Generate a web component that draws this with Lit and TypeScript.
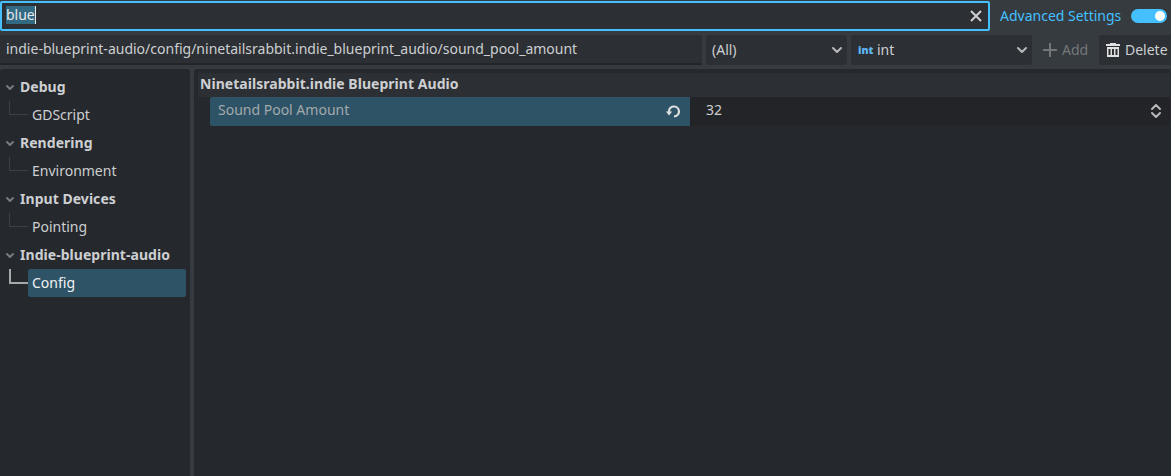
import { LitElement, html, css, svg } from "lit";
import { customElement } from "lit/decorators.js";

const sections = [
  { title: "Debug", child: "GDScript" },
  { title: "Rendering", child: "Environment" },
  { title: "Input Devices", child: "Pointing" },
  { title: "Indie-blueprint-audio", child: "Config", selected: true },
];

const chevron = () => html`<svg class="arrow" width="12" height="12" viewBox="0 0 12 12" fill="none">
  <path d="M2 4l4 4 4-4" stroke="currentColor" stroke-width="2" stroke-linecap="round" stroke-linejoin="round"/>
</svg>`;

const fold = () => html`<svg class="fold" width="12" height="12" viewBox="0 0 12 12" fill="none">
  <path d="M3 5l3 3 3-3" stroke="currentColor" stroke-width="2" stroke-linecap="round" stroke-linejoin="round"/>
</svg>`;

@customElement("app-root")
export class AppRoot extends LitElement {
  static styles = css`
    :host {
      display: flex;
      flex-direction: column;
      gap: 4px;
      box-sizing: border-box;
      width: 1171px;
      height: 476px;
      padding-top: 1px;
      overflow: hidden;
      background: #363b3f;
      color: #cdcfd2;
      font: 14px/20px "Noto Sans", sans-serif;
      white-space: nowrap;
    }
    svg { display: block; flex: none; }
    .bar { display: flex; height: 30px; flex: none; }
    .bar > * { flex: none; }
    .search {
      box-sizing: border-box;
      width: 990px;
      border: 2px solid #44c0ff;
      border-radius: 2px;
      background: #2c2f33;
      display: flex;
      align-items: center;
      justify-content: space-between;
      padding: 0 4px 2px 4px;
    }
    .query { height: 18px; line-height: 18px; background: #336a83; color: #e3e8ea; border-right: 1px solid #e8e8e8; }
    .clear { margin-top: 2px; }
    .advanced { display: flex; align-items: center; gap: 10px; padding-left: 10px; color: #44c0ff; }
    .toggle { box-sizing: border-box; width: 36px; height: 14px; border-radius: 7px; background: #44c0ff; padding: 2px; display: flex; justify-content: flex-end; }
    .knob { width: 10px; height: 10px; border-radius: 50%; background: #fff; }
    .path { box-sizing: border-box; width: 702px; margin-right: 4px; padding: 4px 6px; background: #2c2f33; border-bottom: 2px solid #232529; border-radius: 2px 2px 0 0; }
    .button { box-sizing: border-box; display: flex; align-items: center; background: #2c2f33; border-radius: 3px; padding: 0 4px 0 6px; }
    .filter { width: 141px; margin-right: 4px; justify-content: space-between; }
    .type { width: 181px; justify-content: space-between; }
    .typename { display: flex; align-items: center; gap: 4px; }
    .glyph { box-sizing: border-box; width: 16px; padding-left: 1px; font: 900 10.5px/16px "Noto Sans", sans-serif; color: #5fb8f5; }
    .add { width: 67px; display: flex; align-items: center; gap: 4px; padding-left: 10px; box-sizing: border-box; color: #74777a; }
    .delete { width: 72px; gap: 4px; border-radius: 3px 0 0 3px; }
    .arrow { color: #b7b9bb; }
    .body { flex: 1; display: flex; gap: 4px; min-height: 0; }
    .tree { width: 190px; background: #25282c; border-radius: 3px 3px 0 0; padding-top: 4px; box-sizing: border-box; }
    .head { height: 28px; display: flex; align-items: center; gap: 4px; padding-left: 4px; font-weight: 700; letter-spacing: 0.04px; }
    .fold { color: #787b7e; }
    .item { height: 28px; display: flex; }
    .branch { width: 28px; }
    .leaf { box-sizing: border-box; width: 158px; height: 28px; padding: 4px; border-radius: 2px; }
    .chosen { background: #2e5366; color: #f2f2f2; }
    .inspector { width: 977px; box-sizing: border-box; background: #25282c; border-radius: 3px 3px 0 0; padding: 4px 1px 0 4px; }
    .category { height: 24px; line-height: 22px; padding-left: 2px; background: #2c2f33; font-weight: 700; letter-spacing: 0.04px; }
    .property { display: flex; height: 29px; margin-left: 12px; }
    .label { box-sizing: border-box; width: 480px; padding: 0 9px 0 8px; background: #2e5366; color: #a2a9ad; border-radius: 2px 0 0 2px; display: flex; justify-content: space-between; line-height: 25px; }
    .revert { margin-top: 6px; }
    .value { flex: 1; background: #232428; display: flex; justify-content: space-between; line-height: 25px; padding: 0 6px 0 16px; border-radius: 2px; }
    .spin { margin-top: 6px; }
  `;

  render() {
    return html`
      <div class="bar">
        <div class="search">
          <span class="query">blue</span>
          <svg class="clear" width="16" height="16" viewBox="0 0 16 16"><path d="M3 3l10 10m0-10l-10 10" stroke="#cfd0d1" stroke-width="2"/></svg>
        </div>
        <div class="advanced"><span>Advanced Settings</span><div class="toggle"><div class="knob"></div></div></div>
      </div>
      <div class="bar">
        <div class="path">indie-blueprint-audio/config/ninetailsrabbit.indie_blueprint_audio/sound_pool_amount</div>
        <div class="button filter"><span>(All)</span>${chevron()}</div>
        <div class="button type">
          <span class="typename"><span class="glyph">int</span><span>int</span></span>${chevron()}
        </div>
        <div class="add">
          <svg width="16" height="16" viewBox="0 0 16 16"><path d="M8 1v14M1 8h14" stroke="currentColor" stroke-width="2"/></svg>
          <span>Add</span>
        </div>
        <div class="button delete">
          <svg width="16" height="16" viewBox="0 0 16 16" fill="#e0e0e0"><path fill-rule="evenodd" d="M5 1h6v1h4v2H1V2h4zM2 5h12v10H2zm1.5 2v6H5.500V7zm3.500 0v6h2V7zm3.500 0v6h2V7z"/></svg>
          <span>Delete</span>
        </div>
      </div>
      <div class="body">
        <div class="tree">
          ${sections.map((s) => html`
            <div class="head">${fold()}<span>${s.title}</span></div>
            <div class="item">
              <svg class="branch" width="28" height="28" viewBox="0 0 28 28" fill="none">
                ${s.selected
                  ? svg`<path d="M10 0v14h18" stroke="#a6a8aa" stroke-width="2"/>`
                  : svg`<path d="M9.5 0v13.5H28" stroke="#3d4043"/>`}
              </svg>
              <div class="leaf ${s.selected ? "chosen" : ""}">${s.child}</div>
            </div>`)}
        </div>
        <div class="inspector">
          <div class="category">Ninetailsrabbit.indie Blueprint Audio</div>
          <div class="property">
            <div class="label"><span>Sound Pool Amount</span>
              <svg class="revert" width="16" height="16" viewBox="0 0 16 16"><path d="M4 9V8a5 5 0 1 1 5 5.500" fill="none" stroke="#e0e0e0" stroke-width="2.200"/><path d="M1 8.500h6.200L4 12.500z" fill="#e0e0e0"/></svg>
            </div>
            <div class="value"><span>32</span>
              <svg class="spin" width="16" height="16" viewBox="0 0 16 16"><path d="M4 6l4-4 4 4M4 10l4 4 4-4" fill="none" stroke="#b7b9bb" stroke-width="2" stroke-linecap="round" stroke-linejoin="round"/></svg>
            </div>
          </div>
        </div>
      </div>`;
  }
}
